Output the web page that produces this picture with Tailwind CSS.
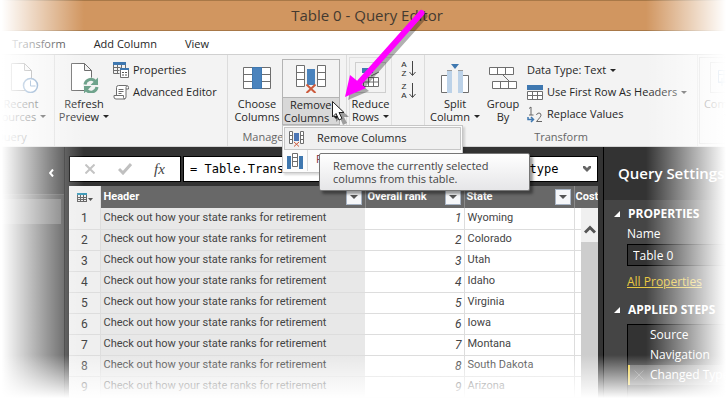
<!DOCTYPE html>
<html lang="en">
<head>
<meta charset="utf-8">
<title>Table 0 - Query Editor</title>
<script src="https://cdn.jsdelivr.net/npm/@tailwindcss/browser@4"></script>
</head>
<body class="bg-white">
<div class="relative flex h-screen flex-col overflow-hidden font-['Open_Sans','Noto_Sans',sans-serif] text-[11px] text-[#262626]">

  <header class="flex h-[31px] flex-none items-center justify-center border-y border-[#a87847] bg-[#d19660]">
    <h1 class="pl-2 text-[15px] text-[#443a30]">Table 0 - Query Editor</h1>
  </header>

  <nav class="flex h-6 flex-none items-center gap-7 border-b border-[#d0d0d0] bg-white pl-3 pt-1" aria-label="Ribbon tabs">
    <a href="#transform">Transform</a>
    <a href="#add">Add Column</a>
    <a href="#view">View</a>
  </nav>

  <!-- Ribbon -->
  <div class="relative z-20 -ml-8 flex h-[92px] flex-none border-b border-[#d4d4d4] bg-[#f3f3f3] whitespace-nowrap">
    <section class="flex w-[87px] flex-none flex-col border-r border-[#dcdcdc] pt-1">
      <div class="flex h-[66px] justify-center pl-5">
        <button class="flex w-14 flex-col items-center leading-[13px]">
          <span class="flex h-[38px] items-center"><svg class="ml-2" width="30" height="30" viewBox="0 0 30 30" fill="#fff" stroke="#6e6e6e"><path d="M1.500 .5h13l7 7v20h-20zM14.500 .5v7h7"/><circle cx="20.500" cy="22.500" r="7" stroke="#3f74ad" stroke-width="1.500"/><path d="M20.500 17.500v5.500h5" fill="none" stroke="#3f74ad"/></svg></span>
          <span>Recent</span><span class="flex items-center gap-1">Sources <i class="border-x-[3px] border-t-[3px] border-x-transparent border-t-current"></i></span>
        </button>
      </div>
      <div class="flex h-[21px] items-center justify-center pt-1 text-[#666]">Query</div>
    </section>

    <section class="flex w-[173px] flex-none flex-col border-r border-[#dcdcdc] pt-1">
      <div class="flex h-[66px]">
        <button class="flex w-[58px] flex-col items-center leading-[13px]">
          <span class="flex h-[38px] items-center"><svg width="30" height="30" viewBox="0 0 30 30" fill="#fff" stroke="#6e6e6e"><path d="M2.500 .5h13l7 7v20h-20zM15.500 .5v7h7"/><circle cx="22" cy="22.500" r="8" fill="#f3f3f3" stroke="none"/><g fill="none" stroke="#6fa38c" stroke-width="3"><path d="M16 21.500a6 6 0 0 1 10.500-3"/><path d="M28 24a6 6 0 0 1-10.500 3"/></g><path d="M29 14.500v7.500h-7.500zM15 30.500V23h7.500z" fill="#6fa38c" stroke="none"/></svg></span>
          <span>Refresh</span><span class="flex items-center gap-1">Preview <i class="border-x-[3px] border-t-[3px] border-x-transparent border-t-current"></i></span>
        </button>
        <div class="flex flex-col">
          <button class="flex h-[22px] items-center gap-1"><svg width="16" height="16" viewBox="0 0 16 16"><path d="M0 0h13v3H0z" fill="#3f78b0"/><path d="M.5 3v8.500h6M.5 5.500h7M.5 8.500h6M4.500 3v8M8.500 3v3M12.500 3v3" fill="none" stroke="#6e6e6e"/><path d="M7.500 6.500h8v9h-8z" fill="#fff" stroke="#6e6e6e"/><path d="M7 6h9v2H7z" fill="#3f78b0"/><path d="M9 10.500h2m1 0h2M9 13h2m1 0h2" stroke="#555"/></svg>Properties</button>
          <button class="flex h-[22px] items-center gap-1"><svg width="16" height="15" viewBox="0 0 16 15" fill="#fff" stroke="#6e6e6e"><path d="M3.500 10V2.500q0-2 2-2h8q2 0 2 2v1.500h-2.500v8q0 2-2 2h-8q-2 0-2-2v-1.500h9.500v2q0 1.500 1.500 1.500"/><path d="M13 4V2.500q0-1.500 1-1.500M5.500 4.500h5M5.500 6.500h5M5.500 8.500h3" fill="none"/></svg>Advanced Editor</button>
        </div>
      </div>
    </section>

    <section class="flex w-[119px] flex-none flex-col border-r border-[#dcdcdc] pt-1">
      <div class="flex h-[66px]">
        <button class="flex w-[54px] flex-col items-center pl-1 leading-[13px]">
          <span class="flex h-[38px] items-center"><svg width="28" height="22" viewBox="0 0 28 22" fill="#fff" stroke="#6e6e6e"><path d="M.5 .5h27v21H.5z"/><path d="M.5 7.500h27M.5 14.500h27"/><path d="M9.500 .5h9v21h-9z" fill="#4a83bd" stroke="#3f78b0"/></svg></span>
          <span>Choose</span><span>Columns</span>
        </button>
        <div class="relative">
          <button class="flex h-[66px] w-[58px] flex-col border border-[#b4b4b4] leading-[13px]" aria-haspopup="menu">
            <span class="flex h-[37px] w-full items-center justify-center"><svg width="30" height="28" viewBox="0 0 30 28" fill="#fff" stroke="#6e6e6e"><path d="M.5 .5h8v21h-8zM21.500 .5h8v21h-8zM.5 7.500h8M.5 14.500h8M21.500 7.500h8M21.500 14.500h8"/><path d="M11 4h8v16h-8z" fill="#4a83bd" stroke="none"/><path d="M10.500 19.500l9 8.500M19.500 19.500l-9 8.500" stroke="#cc5a3c" stroke-width="2"/></svg></span>
            <span class="flex w-full flex-1 flex-col items-start border-t border-[#b4b4b4] bg-[#d8d8d8] pl-px"><span class="pl-[6px]">Remove</span><span class="flex items-center gap-1">Columns <i class="border-x-[3px] border-t-[3px] border-x-transparent border-t-current"></i></span></span>
          </button>
          <!-- Drop-down menu with its tooltip -->
          <div class="absolute top-full left-0 w-[181px] border border-[#c6c6c6] bg-[#fcfcfc] p-px shadow-[2px_2px_2px_rgba(0,0,0,0.15)]" role="menu">
            <button class="flex h-[23px] w-full items-center border border-[#c6c6c6] bg-[#f0f0f0] pl-1" role="menuitem"><svg width="15" height="16" viewBox="0 0 15 16" fill="#fff" stroke="#6e6e6e"><path d="M.5 .5h3v12h-3zM11.500 .5h3v12h-3zM.5 4.500h3M.5 8.500h3M11.500 4.500h3M11.500 8.500h3"/><path d="M5 2h5v8H5z" fill="#4a75b5" stroke="none"/><path d="M5 11l5 4.500M10 11l-5 4.500" stroke="#cc5a3c"/></svg><span class="pl-[13px]">Remove Columns</span></button>
            <button class="flex h-[21px] w-full items-center pl-[3px]" role="menuitem" aria-label="Remove Other Columns"><svg width="16" height="16" viewBox="0 0 16 16" fill="#fff" stroke="#6e6e6e"><path d="M0 3h4v13H0zM12 3h4v13h-4z" fill="#3f78b0" stroke="none"/><path d="M5.500 .5h5v13h-5zM5.500 4.500h5M5.500 8.500h5"/></svg><span class="ml-1 h-full w-[14px] overflow-hidden border-l border-[#dcdcdc] pl-2 leading-[18px] text-[#7a2a3a]">Remove</span></button>
            <div class="absolute top-[27px] left-9 w-[211px] rounded-[2px] border border-[#767676] bg-linear-to-b from-white to-[#e6e6e8] py-[5px] pl-[13px] leading-[13px] text-[#444] shadow-[3px_3px_3px_rgba(0,0,0,0.4)]" role="tooltip">Remove the currently selected<br>columns from this table.</div>
          </div>
        </div>
      </div>
      <div class="flex h-[21px] items-center justify-center pt-1 text-[#666]">Manage Columns</div>
    </section>

    <section class="flex w-[78px] flex-none border-r border-[#dcdcdc] pt-[2px] pl-[2px]">
      <button class="flex h-[69px] w-[43px] flex-none flex-col items-center border border-[#e0e0e0] pt-1 leading-[13px]">
        <span class="mb-1 flex h-[31px] w-[31px] items-center justify-center border border-[#cfcfcf]"><svg width="18" height="20" viewBox="0 0 18 20" fill="#fff" stroke="#6e6e6e"><path d="M0 0h11v5H0z" fill="#3f78b0" stroke="none"/><path d="M1.500 9.500h15v9h-15zM1.500 14h15M6.500 9.500v9M11.500 9.500v9M9 8l8-4"/></svg></span>
        <span>Reduce</span><span class="flex items-center gap-1">Rows <i class="border-x-[3px] border-t-[3px] border-x-transparent border-t-current"></i></span>
      </button>
      <div class="flex flex-col gap-1 pt-[3px] pl-2">
        <button class="flex items-center gap-px" aria-label="Sort ascending"><span class="flex w-2 flex-col text-center font-['Liberation_Sans',sans-serif] text-[8px] leading-[9px]"><span>A</span><span>Z</span></span><svg width="7" height="16" viewBox="0 0 7 16" fill="none" stroke="#444"><path d="M3.500 0v14M.5 11l3 3.500 3-3.500"/></svg></button>
        <button class="flex items-center gap-px" aria-label="Sort descending"><span class="flex w-2 flex-col text-center font-['Liberation_Sans',sans-serif] text-[8px] leading-[9px]"><span>Z</span><span>A</span></span><svg width="7" height="16" viewBox="0 0 7 16" fill="none" stroke="#444"><path d="M3.500 0v14M.5 11l3 3.500 3-3.500"/></svg></button>
      </div>
    </section>

    <section class="flex min-w-[273px] flex-1 flex-col border-r border-[#dcdcdc] pt-1">
      <div class="flex h-[66px]">
        <button class="flex w-[60px] flex-col items-center leading-[13px]">
          <span class="flex h-[38px] items-center"><svg width="28" height="29" viewBox="0 0 28 29" fill="#fff" stroke="#6e6e6e"><path d="M.5 11.500h6v17h-6zM21.500 11.500h6v17h-6z"/><path d="M6 6h5v23H6zM17 6h5v23h-5z" fill="#bcd2e8" stroke="none"/><path d="M6 6.500h5M17 6.500h5" stroke="#9a9a9a"/><path d="M10 0h8l-4 5z" fill="#3f78b0" stroke="none"/></svg></span>
          <span>Split</span><span class="flex items-center gap-1">Column <i class="border-x-[3px] border-t-[3px] border-x-transparent border-t-current"></i></span>
        </button>
        <button class="flex w-9 flex-col items-center leading-[13px]">
          <span class="flex h-[38px] items-center"><svg width="28" height="22" viewBox="0 0 28 22" fill="#fff" stroke="#6e6e6e"><path d="M.5 .5h24v7H.5zM8.500 .5v7M16.500 .5v7M3.500 14.500h24v7h-24zM11.500 14.500v7M19.500 14.500v7M14 8l6 6"/></svg></span>
          <span>Group</span><span>By</span>
        </button>
        <div class="flex flex-col pl-[6px]">
          <button class="flex h-[22px] items-center gap-1">Data Type: Text <i class="border-x-[3px] border-t-[3px] border-x-transparent border-t-current"></i></button>
          <button class="flex h-[22px] items-center gap-1"><svg width="16" height="15" viewBox="0 0 16 15"><path d="M.5 6.500h15v8H.5zM.5 10.500h15M5.500 6.500v8M10.500 6.500v8" fill="#fff" stroke="#6e6e6e"/><path d="M0 0h16v5H0z" fill="#3f78b0"/></svg>Use First Row As Headers <i class="border-x-[3px] border-t-[3px] border-x-transparent border-t-current"></i></button>
          <button class="flex h-[22px] items-center gap-1"><svg width="16" height="17" viewBox="0 0 16 17" fill="none" stroke="#666"><path d="M2 2.500l2-1.500v8M2 9h4.500"/><path d="M9.500 9q.5-2 2.500-2t2 2.200q0 1.300-4.500 6.300h5.500"/><path d="M1 11v2.500h5M4 11l2.500 2.500L4 16" stroke="#3f78b0" stroke-width="1.500"/></svg>Replace Values</button>
        </div>
      </div>
      <div class="flex h-[21px] items-center justify-center pt-1 text-[#666]">Transform</div>
    </section>

    <section class="w-[28px] flex-none overflow-hidden pt-[2px] pl-px">
      <button class="flex h-[87px] w-14 flex-col items-center border border-[#d0d0d0] pt-1 leading-[13px]">
        <span class="mb-1 flex h-[31px] w-[34px] items-center justify-center border border-[#bfbfbf]"><svg width="18" height="18" viewBox="0 0 18 18" fill="#fff" stroke="#3f78b0"><path d="M.5 1.500h16v12H.5zM.5 5.500h16M6 1.500v12M12 1.500v12M4 9v8M0 13h8"/></svg></span>
        <span>Combine</span><i class="mt-1 border-x-[3px] border-t-[3px] border-x-transparent border-t-current"></i>
      </button>
    </section>
  </div>

  <!-- Workspace -->
  <main class="flex min-h-0 flex-1 bg-[#333]">
    <aside class="flex w-16 flex-none flex-col bg-[#454545]">
      <div class="flex h-12 items-center justify-end border-b border-[#555] bg-[#333] pr-[10px] pt-1"><button aria-label="Collapse queries"><svg width="5" height="8" viewBox="0 0 5 8" fill="none" stroke="#fff" stroke-width="2"><path d="M4 .5L1 4l3 3.500"/></svg></button></div>
      <div class="mt-1 mr-[3px] h-[25px] bg-[#6b6b6b]"></div>
    </aside>

    <section class="flex min-w-0 flex-1 flex-col border-l border-[#1c1c1c] bg-[#333] pt-[9px] pr-[5px] pl-1">
      <div class="flex h-[26px] flex-none gap-[2px]">
        <div class="flex w-[112px] flex-none items-center justify-around border border-black bg-white px-1">
          <button aria-label="Cancel"><svg width="10" height="10" viewBox="0 0 10 10" stroke="#c4c4c4" stroke-width="2"><path d="M.5 .5l9 9M9.500 .5l-9 9"/></svg></button>
          <button aria-label="Commit"><svg width="14" height="12" viewBox="0 0 14 12" fill="none" stroke="#c0c0c0" stroke-width="3"><path d="M1 6l4 4L13 1"/></svg></button>
          <button class="font-['Liberation_Serif',serif] text-[15px] leading-4 text-[#444] italic">fx</button>
        </div>
        <div class="flex min-w-0 flex-1 items-center border border-black bg-white pr-[6px]">
          <input aria-label="Formula" class="min-w-0 flex-1 bg-transparent pl-[6px] font-['DejaVu_Sans_Mono',monospace] text-[12px] text-black outline-none" value="= Table.TransformColumnTypes(Data0,{{&quot;Header&quot;, type">
          <svg width="8" height="6" viewBox="0 0 8 6" fill="#666"><path d="M0 0h2l2 2 2-2h2v2L4 6 0 2z"/></svg>
        </div>
      </div>
      <div class="relative mt-1 flex-1 overflow-hidden bg-white">
        <table class="w-full table-fixed border-collapse text-left font-['Roboto','Noto_Sans',sans-serif] text-[11px] text-[#444]">
          <colgroup><col class="w-[31px]"><col><col class="w-[99px]"><col class="w-[110px]"><col class="w-[24px]"></colgroup>
          <thead>
            <tr class="h-[22px] bg-[#686868] text-white">
              <th class="border-r border-[#ddd] bg-[#efefef] p-0 pl-2"><svg width="16" height="9" viewBox="0 0 16 9"><path d="M0 0h10v2H0z" fill="#3f9ab8"/><path d="M0 4.500h10M0 6.500h10M.5 2v7M3.500 2v7M6.500 2v7M9.500 2v7M0 8.500h10" stroke="#666" fill="none"/><path d="M11 5h5l-2.500 3z" fill="#555"/></svg></th>
              <th class="p-0 pl-[3px]"><div class="flex items-center justify-between pr-[3px]">Header<button class="flex h-4 w-4 items-center justify-center border border-[#a8b4c4] bg-[#f6f7f9]" aria-label="Filter Header"><i class="border-x-4 border-t-4 border-x-transparent border-t-[#555]"></i></button></div></th>
              <th class="border-l border-[#8a8a8a] p-0 pl-[2px]"><div class="flex items-center justify-between pr-[3px] whitespace-nowrap">Overall rank<button class="flex h-4 w-4 items-center justify-center border border-[#a8b4c4] bg-[#f6f7f9]" aria-label="Filter Overall rank"><i class="border-x-4 border-t-4 border-x-transparent border-t-[#555]"></i></button></div></th>
              <th class="border-l border-[#8a8a8a] p-0 pl-[2px]"><div class="flex items-center justify-between pr-[3px]">State<button class="flex h-4 w-4 items-center justify-center border border-[#a8b4c4] bg-[#f6f7f9]" aria-label="Filter State"><i class="border-x-4 border-t-4 border-x-transparent border-t-[#555]"></i></button></div></th>
              <th class="border-l border-[#8a8a8a] p-0 pl-px">Cost</th>
            </tr>
          </thead>
          <tbody id="rows"></tbody>
        </table>
        <div class="absolute top-[22px] right-0 bottom-0 flex w-[17px] flex-col bg-[#cdcdcd]">
          <button class="flex h-[34px] items-center justify-center bg-[#f0f0f0] pt-2" aria-label="Scroll up"><svg width="12" height="9" viewBox="0 0 12 9" fill="none" stroke="#555" stroke-width="3"><path d="M1 7.500L6 2.500l5 5"/></svg></button>
        </div>
      </div>
    </section>

    <aside class="flex w-[123px] flex-none flex-col overflow-hidden border-l border-black bg-[#454545] whitespace-nowrap text-white">
      <h2 class="flex h-[53px] flex-none items-center bg-[#333] pl-[14px] text-[15px] font-semibold">Query Settings</h2>
      <h3 class="flex items-center gap-2 pt-1 pl-[10px] text-[12px] leading-[20px] font-bold"><svg width="6" height="6" viewBox="0 0 6 6" fill="#fff"><path d="M6 0v6H0z"/></svg>PROPERTIES</h3>
      <label for="name" class="pl-[23px] text-[12px] leading-[20px]">Name</label>
      <input id="name" class="ml-[23px] h-[22px] w-[180px] border border-black bg-[#333] pl-[5px] text-[12px]" value="Table 0">
      <a href="#all" class="pt-[6px] pl-[23px] text-[12px] leading-[20px] text-[#e8c840] underline">All Properties</a>
      <h3 class="mt-2 flex items-center gap-2 pl-[10px] text-[12px] leading-[20px] font-bold"><svg width="6" height="6" viewBox="0 0 6 6" fill="#fff"><path d="M6 0v6H0z"/></svg>APPLIED STEPS</h3>
      <ol class="mt-1 ml-[23px] flex-1 border-t border-l border-black bg-[#333] text-[12px] leading-[20px]">
        <li class="pl-[22px]">Source</li>
        <li class="pl-[22px]">Navigation</li>
        <li class="flex items-center border-l-2 border-[#f0d040] bg-[#666] pl-1"><svg class="mr-[6px] flex-none" width="10" height="10" viewBox="0 0 10 10" stroke="#8a8a8a"><path d="M.5 .5l9 9M9.500 .5l-9 9"/></svg>Changed Type</li>
      </ol>
    </aside>
  </main>

  <!-- Edge fades -->
  <div class="pointer-events-none absolute inset-y-0 left-0 z-30 w-[84px] bg-linear-to-r from-white from-2% to-white/0"></div>
  <div class="pointer-events-none absolute inset-y-0 right-0 z-30 w-20 bg-linear-to-l from-white to-white/0"></div>
  <div class="pointer-events-none absolute inset-x-0 bottom-0 z-30 h-12 bg-linear-to-t from-white from-10% to-white/0"></div>

  <!-- Pointer and callout arrow -->
  <svg class="pointer-events-none absolute top-0 left-[326px] z-40" width="110" height="130" viewBox="326 0 110 130">
    <g opacity=".3" transform="translate(3 3)"><path d="M421.500 13L360 82" stroke="#000" stroke-width="6" stroke-linecap="round"/><path d="M345 97l5-22 16 13z"/></g>
    <path d="M421.500 13L360 82" stroke="#f0f" stroke-width="6" stroke-linecap="round"/><path d="M345 97l5-22 16 13z" fill="#f0f"/>
    <path d="M336 105v17l4-4 3 7 4-2-3-6h5z" opacity=".35"/>
    <path d="M332.500 101.500v15.500l3.500-3.500 3 6.500 3-1.500-3-6h5z" fill="#fff" stroke="#222"/>
  </svg>
</div>
<script>
  const states = ["Wyoming", "Colorado", "Utah", "Idaho", "Virginia", "Iowa", "Montana", "South Dakota", "Arizona"];
  document.getElementById("rows").innerHTML = states.map((state, i) => `
    <tr class="h-[21px] border-b border-[#ddd]">
      <td class="border-r border-[#ddd] bg-[#efefef] p-0 text-center text-[12px]">${i + 1}</td>
      <td class="bg-[#e8e8e8] p-0 pl-[3px] whitespace-nowrap">Check out how your state ranks for retirement</td>
      <td class="border-r border-[#ddd] p-0 pr-[2px] text-right text-[12px] italic">${i + 1}</td>
      <td class="border-r border-[#ddd] p-0 pl-[3px] whitespace-nowrap">${state}</td>
      <td class="p-0"></td>
    </tr>`).join("");
</script>
</body>
</html>
